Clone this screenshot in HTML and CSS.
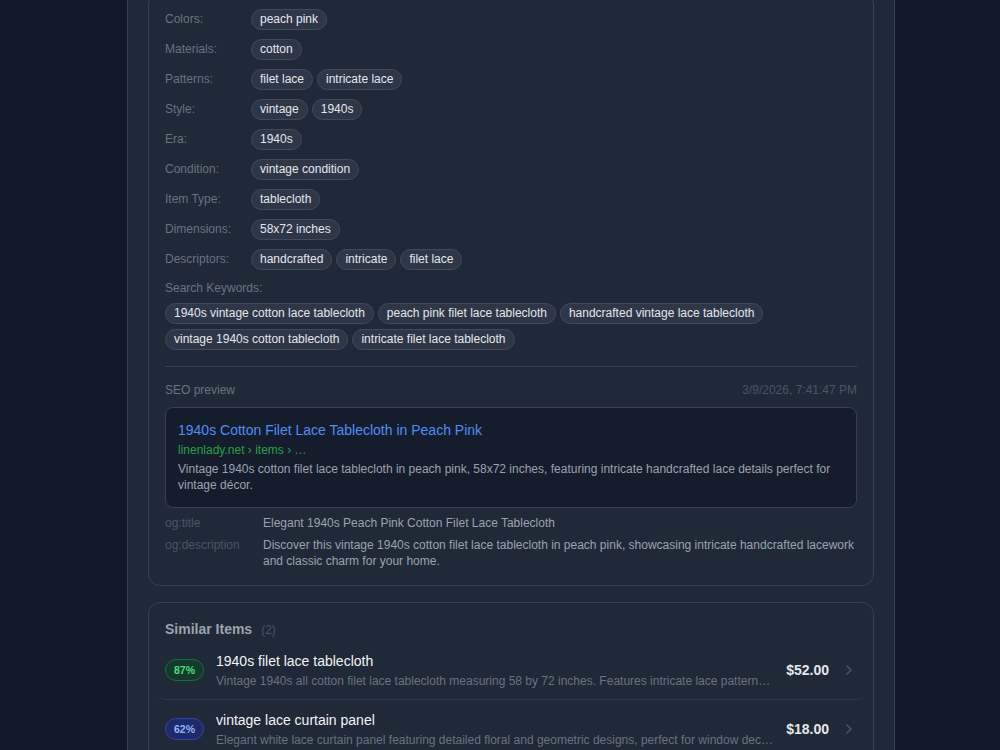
FILE: index.html
```html
<!DOCTYPE html>
<html lang="en">
<head>
  <meta charset="UTF-8">
  <meta name="viewport" content="width=device-width, initial-scale=1.0">
  <title>Item details</title>
  <link rel="stylesheet" href="styles.css">
</head>
<body>
  <div class="page">

    <div class="card card-attrs">
      <div class="attr-row">
        <div class="attr-label">Colors:</div>
        <div class="tags"><span class="tag">peach pink</span></div>
      </div>
      <div class="attr-row">
        <div class="attr-label">Materials:</div>
        <div class="tags"><span class="tag">cotton</span></div>
      </div>
      <div class="attr-row">
        <div class="attr-label">Patterns:</div>
        <div class="tags"><span class="tag">filet lace</span><span class="tag">intricate lace</span></div>
      </div>
      <div class="attr-row">
        <div class="attr-label">Style:</div>
        <div class="tags"><span class="tag">vintage</span><span class="tag">1940s</span></div>
      </div>
      <div class="attr-row">
        <div class="attr-label">Era:</div>
        <div class="tags"><span class="tag">1940s</span></div>
      </div>
      <div class="attr-row">
        <div class="attr-label">Condition:</div>
        <div class="tags"><span class="tag">vintage condition</span></div>
      </div>
      <div class="attr-row">
        <div class="attr-label">Item Type:</div>
        <div class="tags"><span class="tag">tablecloth</span></div>
      </div>
      <div class="attr-row">
        <div class="attr-label">Dimensions:</div>
        <div class="tags"><span class="tag">58x72 inches</span></div>
      </div>
      <div class="attr-row">
        <div class="attr-label">Descriptors:</div>
        <div class="tags"><span class="tag">handcrafted</span><span class="tag">intricate</span><span class="tag">filet lace</span></div>
      </div>

      <div class="keywords">
        <div class="keywords-label">Search Keywords:</div>
        <div class="tags">
          <span class="tag">1940s vintage cotton lace tablecloth</span>
          <span class="tag">peach pink filet lace tablecloth</span>
          <span class="tag">handcrafted vintage lace tablecloth</span>
          <span class="tag">vintage 1940s cotton tablecloth</span>
          <span class="tag">intricate filet lace tablecloth</span>
        </div>
      </div>

      <div class="seo">
        <div class="seo-head">
          <span>SEO preview</span>
          <span class="seo-date">3/9/2026, 7:41:47 PM</span>
        </div>
        <div class="serp">
          <div class="serp-title">1940s Cotton Filet Lace Tablecloth in Peach Pink</div>
          <div class="serp-url">linenlady.net<span class="crumb"> › items › …</span></div>
          <div class="serp-desc">Vintage 1940s cotton filet lace tablecloth in peach pink, 58x72 inches, featuring intricate handcrafted lace details perfect for vintage décor.</div>
        </div>
        <div class="og">
          <div class="og-key">og:title</div>
          <div class="og-val">Elegant 1940s Peach Pink Cotton Filet Lace Tablecloth</div>
          <div class="og-key">og:description</div>
          <div class="og-val">Discover this vintage 1940s cotton filet lace tablecloth in peach pink, showcasing intricate handcrafted lacework and classic charm for your home.</div>
        </div>
      </div>
    </div>

    <div class="card">
      <div class="similar-head">
        <span class="similar-title">Similar Items</span>
        <span class="similar-count">(2)</span>
      </div>
      <div class="similar-list">
        <div class="similar-row">
          <span class="match match-high">87%</span>
          <div class="similar-text">
            <div class="similar-name">1940s filet lace tablecloth</div>
            <div class="similar-desc">Vintage 1940s all cotton filet lace tablecloth measuring 58 by 72 inches. Features intricate lace patterns throughout and a soft peach tone.</div>
          </div>
          <span class="price">$52.00</span>
          <svg class="chev" width="16" height="16" viewBox="0 0 16 16"><path d="M6 4l4 4-4 4" fill="none" stroke="currentColor" stroke-width="1.5" stroke-linecap="round" stroke-linejoin="round"/></svg>
        </div>
        <div class="similar-row">
          <span class="match match-mid">62%</span>
          <div class="similar-text">
            <div class="similar-name">vintage lace curtain panel</div>
            <div class="similar-desc">Elegant white lace curtain panel featuring detailed floral and geometric designs, perfect for window decor or a vintage cottage look.</div>
          </div>
          <span class="price">$18.00</span>
          <svg class="chev" width="16" height="16" viewBox="0 0 16 16"><path d="M6 4l4 4-4 4" fill="none" stroke="currentColor" stroke-width="1.5" stroke-linecap="round" stroke-linejoin="round"/></svg>
        </div>
      </div>
    </div>

  </div>
</body>
</html>
```

FILE: styles.css
```css
* {
  box-sizing: border-box;
}

html, body {
  height: 100%;
}

body {
  margin: 0;
  background-color: #111827;
  color: #e5e7eb;
  font-family: 'Liberation Sans', Arial, sans-serif;
  font-size: 12px;
  overflow: hidden;
}

.page {
  width: 768px;
  min-height: 100%;
  margin-left: 127px;
  padding: 0 20px 40px;
  background-color: #1f2937;
  border-left: 1px solid #374151;
  border-right: 1px solid #374151;
}

.card {
  background-color: #1f2937;
  border: 1px solid #374151;
  border-radius: 12px;
  padding: 16px;
}

.card + .card {
  margin-top: 16px;
}

/* first card is scrolled partly out of view */
.card-attrs {
  margin-top: -8px;
}

/* attribute rows */
.attr-row {
  display: flex;
  align-items: flex-start;
}

.attr-row + .attr-row {
  margin-top: 9px;
}

.attr-label {
  width: 86px;
  flex-shrink: 0;
  color: #6b7280;
  line-height: 20px;
}

.tags {
  display: flex;
  flex-wrap: wrap;
  gap: 5px 4px;
}

.tag {
  display: inline-block;
  padding: 2px 8px;
  line-height: 15px;
  color: #e5e7eb;
  background-color: #2d3747;
  border: 1px solid #414b5b;
  border-radius: 999px;
  white-space: nowrap;
}

.keywords {
  margin-top: 10px;
}

.keywords-label {
  color: #6b7280;
  line-height: 16px;
  margin-bottom: 7px;
}

/* SEO preview */
.seo {
  margin-top: 16px;
  padding-top: 15px;
  border-top: 1px solid #374151;
}

.seo-head {
  display: flex;
  justify-content: space-between;
  color: #6b7280;
  line-height: 16px;
}

.seo-date {
  color: #4b5563;
}

.serp {
  margin-top: 9px;
  padding: 12px 12px 14px;
  background-color: #151c2b;
  border: 1px solid #374151;
  border-radius: 8px;
}

.serp-title {
  font-size: 14px;
  line-height: 20px;
  color: #4f8ef7;
}

.serp-url {
  margin-top: 2px;
  line-height: 16px;
  color: #22a34a;
}

.serp-desc {
  margin-top: 3px;
  line-height: 16px;
  color: #9ca3af;
}

.og {
  display: grid;
  grid-template-columns: 98px 1fr;
  row-gap: 6px;
  margin-top: 7px;
  line-height: 16px;
}

.og-key {
  color: #4b5563;
}

.og-val {
  color: #9ca3af;
}

/* similar items */
.similar-head {
  display: flex;
  align-items: baseline;
  gap: 9px;
  line-height: 20px;
}

.similar-title {
  font-size: 14px;
  font-weight: bold;
  color: #9ca3af;
}

.similar-count {
  color: #4b5563;
}

.similar-list {
  margin-top: 1px;
}

.similar-row {
  display: flex;
  align-items: center;
  gap: 12px;
  margin: 0 -8px;
  padding: 10px 8px;
  border-radius: 8px;
  border-bottom: 1px solid rgba(55, 65, 81, 0.6);
}

.similar-row:last-child {
  border-bottom: none;
}

.match {
  flex-shrink: 0;
  padding: 3px 8px;
  font-size: 10.5px;
  font-weight: bold;
  line-height: 14px;
  border-radius: 999px;
  border: 1px solid;
}

.match-high {
  color: #4ade80;
  background-color: #153a2b;
  border-color: #1c6b3c;
}

.match-mid {
  color: #93b4fd;
  background-color: #1f2a6b;
  border-color: #3341a8;
}

.similar-text {
  flex: 1;
  min-width: 0;
}

.similar-name {
  font-size: 14px;
  line-height: 20px;
  color: #f3f4f6;
}

.similar-desc {
  margin-top: 2px;
  line-height: 16px;
  color: #6b7280;
  white-space: nowrap;
  overflow: hidden;
  text-overflow: ellipsis;
}

.price {
  flex-shrink: 0;
  font-size: 14px;
  font-weight: bold;
  color: #e5e7eb;
}

.chev {
  flex-shrink: 0;
  color: #4b5563;
}
```
